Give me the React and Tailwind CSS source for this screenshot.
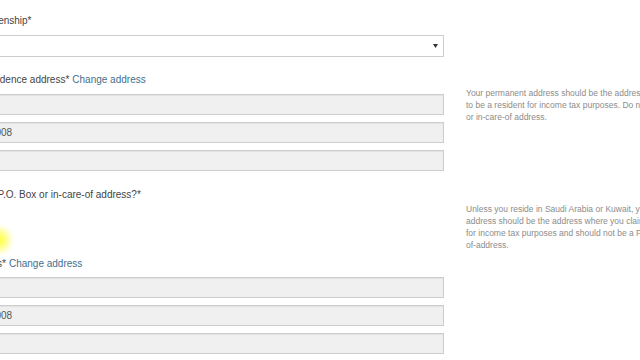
const fieldClass =
  'h-[21px] w-full border border-[#cdcdcd] bg-[#f0f0f0] px-2 text-[10px] leading-[19px] text-[#555] shadow-[inset_0_1px_1px_rgba(0,0,0,0.06)] whitespace-nowrap overflow-hidden';

function Label({ text, link }) {
  return (
    <div className="h-[14px] text-[10px] leading-[14px] text-[#444] whitespace-nowrap">
      {text}
      {link && <span className="ml-[3px] text-[#3f6f8e]">{link}</span>}
    </div>
  );
}

function AddressInputs() {
  return (
    <div className="mt-[7px] flex flex-col gap-[7px]">
      <div className={fieldClass}></div>
      <div className={fieldClass}>Apartment 1008</div>
      <div className={fieldClass}></div>
    </div>
  );
}

function Help({ lines, pad }) {
  return (
    <div className={`${pad} text-[8.5px] leading-[12px] text-[#8c8c8c] whitespace-nowrap`}>
      {lines.map((l) => (
        <div key={l}>{l}</div>
      ))}
    </div>
  );
}

export default function App() {
  return (
    <div className="relative h-[360px] w-[640px] overflow-hidden bg-white font-['Liberation_Sans',Arial,sans-serif]">
      <div className="ml-[-68px] pt-[14px]">
        {/* citizenship */}
        <div className="w-[512px]">
          <Label text="Country of citizenship*" />
          <div className="mt-[7px] flex h-[22px] items-center justify-end border border-[#cdcdcd] bg-white pr-[5px]">
            <svg width="5" height="4" viewBox="0 0 5 4">
              <path d="M0 0h5L2.5 4z" fill="#333" />
            </svg>
          </div>
        </div>

        {/* residence */}
        <div className="mt-[16px] flex gap-[22px]">
          <div className="w-[512px] shrink-0">
            <Label text="Permanent residence address*" link="Change address" />
            <AddressInputs />
          </div>
          <Help
            pad="pt-[14px]"
            lines={[
              'Your permanent address should be the address where you claim',
              'to be a resident for income tax purposes. Do not use a P.O. Box',
              'or in-care-of address.',
            ]}
          />
        </div>

        {/* po box question */}
        <div className="mt-[17px] flex gap-[22px]">
          <div className="w-[512px] shrink-0">
            <Label text="Is the above a P.O. Box or in-care-of address?*" />
            <div className="flex h-[55px] flex-col justify-center gap-[6px] text-[10px] text-[#444]">
              <label className="flex items-center gap-1">
                <input type="radio" name="po" className="h-3 w-3" /> Yes
              </label>
              <label className="flex items-center gap-1">
                <input type="radio" name="po" className="h-3 w-3" /> No
              </label>
            </div>
          </div>
          <Help
            pad="pt-[15px]"
            lines={[
              'Unless you reside in Saudi Arabia or Kuwait, your mailing',
              'address should be the address where you claim to be a resident',
              'for income tax purposes and should not be a P.O. Box or in-care-',
              'of-address.',
            ]}
          />
        </div>

        {/* mailing */}
        <div className="w-[512px]">
          <Label text="Mailing address*" link="Change address" />
          <div className="mt-[-1px]">
            <AddressInputs />
          </div>
        </div>
      </div>

      {/* cursor highlight */}
      <div className="absolute left-[-18px] top-[224px] h-[32px] w-[32px] rounded-full bg-[radial-gradient(circle,#ffff30_0%,#ffff90_35%,#ffffd0_55%,transparent_72%)]"></div>
    </div>
  );
}
